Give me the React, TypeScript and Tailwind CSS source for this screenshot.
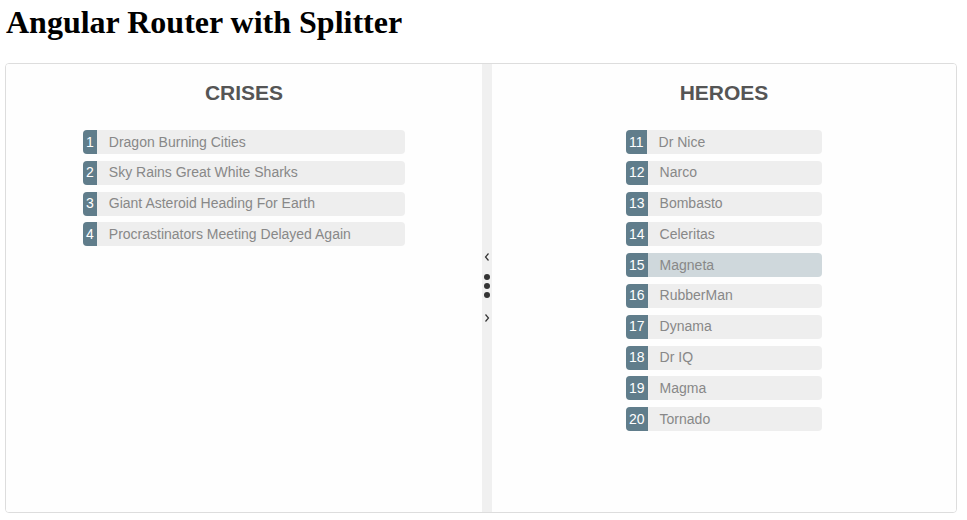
const crises = [
  { id: 1, name: 'Dragon Burning Cities' },
  { id: 2, name: 'Sky Rains Great White Sharks' },
  { id: 3, name: 'Giant Asteroid Heading For Earth' },
  { id: 4, name: 'Procrastinators Meeting Delayed Again' },
]

const heroes = [
  { id: 11, name: 'Dr Nice' },
  { id: 12, name: 'Narco' },
  { id: 13, name: 'Bombasto' },
  { id: 14, name: 'Celeritas' },
  { id: 15, name: 'Magneta' },
  { id: 16, name: 'RubberMan' },
  { id: 17, name: 'Dynama' },
  { id: 18, name: 'Dr IQ' },
  { id: 19, name: 'Magma' },
  { id: 20, name: 'Tornado' },
]

type Item = { id: number; name: string }

function ItemList({ items, width, selectedId }: { items: Item[]; width: string; selectedId?: number }) {
  return (
    <ul className={`flex flex-col gap-[6.8px] ${width}`}>
      {items.map((item) => (
        <li
          key={item.id}
          className={`flex h-[24px] items-center rounded-[4px] text-[14px] text-[#888] ${
            item.id === selectedId ? 'bg-[#cfd8dc]' : 'bg-[#eee]'
          }`}
        >
          <span className="flex h-full items-center rounded-l-[4px] bg-[#607d8b] px-[3px] text-white">
            {item.id}
          </span>
          <span className="ml-[12px]">{item.name}</span>
        </li>
      ))}
    </ul>
  )
}

function Pane({ title, children }: { title: string; children: React.ReactNode }) {
  return (
    <section className="flex flex-col items-center bg-[#fefefe] pt-[16px]">
      <h2 className="text-[21px] leading-[25px] font-bold text-[#555]">{title}</h2>
      <div className="mt-[25px]">{children}</div>
    </section>
  )
}

function Chevron({ dir }: { dir: 'left' | 'right' }) {
  return (
    <svg width="6" height="8" viewBox="0 0 6 8" className="text-[#333]">
      <polyline
        points={dir === 'left' ? '4.5,0.5 1.5,4 4.5,7.5' : '1.5,0.5 4.5,4 1.5,7.5'}
        fill="none"
        stroke="currentColor"
        strokeWidth="1.2"
      />
    </svg>
  )
}

export default function App() {
  return (
    <div className="min-h-[520px] bg-white px-[5px] font-['Liberation_Sans',Arial,sans-serif]">
      <h1 className="pt-[4px] pl-px font-['Liberation_Serif','Times_New_Roman',serif] text-[32px] leading-[37px] font-bold text-black">
        Angular Router with Splitter
      </h1>
      <div className="mt-[22px] grid h-[450px] w-[952px] grid-cols-[476px_10px_1fr] overflow-hidden rounded-[4px] border border-[#ddd]">
        <Pane title="CRISES">
          <ItemList items={crises} width="w-[322px]" />
        </Pane>
        <div className="flex flex-col items-center bg-[#f0f0f0] pt-[189px]">
          <Chevron dir="left" />
          <div className="mt-[13px] flex flex-col gap-[3px]">
            <span className="h-[6px] w-[6px] rounded-full bg-[#333]" />
            <span className="h-[6px] w-[6px] rounded-full bg-[#333]" />
            <span className="h-[6px] w-[6px] rounded-full bg-[#333]" />
          </div>
          <div className="mt-[16px]">
            <Chevron dir="right" />
          </div>
        </div>
        <Pane title="HEROES">
          <ItemList items={heroes} width="w-[196px]" selectedId={15} />
        </Pane>
      </div>
    </div>
  )
}
